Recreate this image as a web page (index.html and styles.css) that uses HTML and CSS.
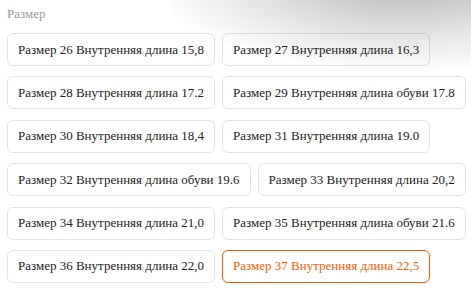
FILE: index.html
```html
<!DOCTYPE html>
<html lang="en">
<head>
    <meta charset="UTF-8">
    <title>Размер</title>
    <link rel="stylesheet" href="styles.css">
</head>
<body>
    <div class="size-picker">
        <p class="size-label">Размер</p>
        <div class="size-row">
            <button class="size-option">Размер 26 Внутренняя длина 15,8</button>
            <button class="size-option">Размер 27 Внутренняя длина 16,3</button>
        </div>
        <div class="size-row">
            <button class="size-option">Размер 28 Внутренняя длина 17.2</button>
            <button class="size-option">Размер 29 Внутренняя длина обуви 17.8</button>
        </div>
        <div class="size-row">
            <button class="size-option">Размер 30 Внутренняя длина 18,4</button>
            <button class="size-option">Размер 31 Внутренняя длина 19.0</button>
        </div>
        <div class="size-row">
            <button class="size-option">Размер 32 Внутренняя длина обуви 19.6</button>
            <button class="size-option">Размер 33 Внутренняя длина 20,2</button>
        </div>
        <div class="size-row">
            <button class="size-option">Размер 34 Внутренняя длина 21,0</button>
            <button class="size-option">Размер 35 Внутренняя длина обуви 21.6</button>
        </div>
        <div class="size-row">
            <button class="size-option">Размер 36 Внутренняя длина 22,0</button>
            <button class="size-option active">Размер 37 Внутренняя длина 22,5</button>
        </div>
    </div>
    <div class="shade"></div>
</body>
</html>
```

FILE: styles.css
```css
body {
    margin: 0;
    background: #fff;
    color: #222;
    font-size: 13px;
    font-family: 'Liberation Serif', 'Times New Roman', serif !important;
}

.size-picker {
    padding: 6px 7px;
}

.size-label {
    margin: 0 0 11px;
    font-family: 'Liberation Serif', 'Times New Roman', serif !important;
    color: #999;
    line-height: 16px;
}

.size-row {
    display: flex;
    gap: 7px;
    margin-bottom: 10.4px;
}

.size-option {
    height: 33px;
    padding: 0 10px;
    border: 1px solid #e3e3e3;
    border-radius: 6px;
    background: #fff;
    font-size: 13px;
    font-family: 'Liberation Serif', 'Times New Roman', serif !important;
    color: #222;
    white-space: nowrap;
    cursor: pointer;
}

.size-option.active {
    border-color: #ff5a00;
    color: #ff5a00;
}

.shade {
    position: absolute;
    top: 0;
    right: 0;
    width: 300px;
    height: 110px;
    background: radial-gradient(ellipse 260px 95px at 78% -20%, rgba(0, 0, 0, 0.3), rgba(0, 0, 0, 0.12) 55%, rgba(0, 0, 0, 0) 100%);
    pointer-events: none;
}
```
